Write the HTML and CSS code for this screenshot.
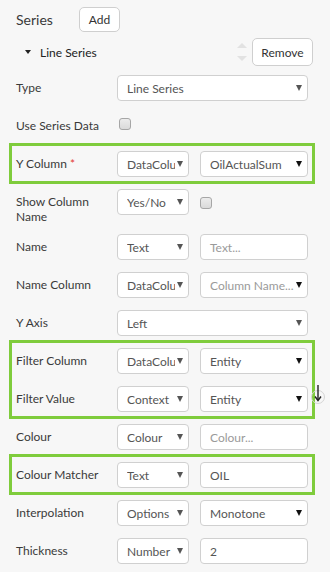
FILE: index.html
```html
<!DOCTYPE html>
<html lang="en">
<head>
    <meta charset="UTF-8">
    <meta name="viewport" content="width=device-width, initial-scale=1.0">
    <title>Series Editor</title>
    <link rel="stylesheet" href="styles.css">
</head>
<body>
    <div class="panel">
        <div class="series-head">
            <span class="title">Series</span>
            <button class="btn btn-add">Add</button>
        </div>

        <div class="item-head">
            <span class="caret"></span>
            <span class="item-name">Line Series</span>
            <span class="sorter">
                <span class="sort-up"></span>
                <span class="sort-down"></span>
            </span>
            <button class="btn btn-remove">Remove</button>
        </div>

        <div class="row">
            <div class="label">Type</div>
            <div class="controls">
                <div class="select full"><span class="val">Line Series</span><span class="arrow"></span></div>
            </div>
        </div>

        <div class="row">
            <div class="label">Use Series Data</div>
            <div class="controls">
                <span class="check check-top"></span>
            </div>
        </div>

        <div class="hl">
            <div class="row">
                <div class="label">Y Column <span class="req">*</span></div>
                <div class="controls">
                    <div class="select sm"><span class="val">DataColu</span><span class="arrow"></span></div>
                    <div class="select lg"><span class="val">OilActualSum</span><span class="arrow dark"></span></div>
                </div>
            </div>
        </div>

        <div class="row row-wrap">
            <div class="label">Show Column Name</div>
            <div class="controls">
                <div class="select sm"><span class="val">Yes/No</span><span class="arrow"></span></div>
                <span class="check check-mid"></span>
            </div>
        </div>

        <div class="row">
            <div class="label">Name</div>
            <div class="controls">
                <div class="select sm"><span class="val">Text</span><span class="arrow"></span></div>
                <div class="input lg"><span class="placeholder">Text...</span></div>
            </div>
        </div>

        <div class="row">
            <div class="label">Name Column</div>
            <div class="controls">
                <div class="select sm"><span class="val">DataColu</span><span class="arrow"></span></div>
                <div class="select lg"><span class="val placeholder">Column Name...</span><span class="arrow dark"></span></div>
            </div>
        </div>

        <div class="row">
            <div class="label">Y Axis</div>
            <div class="controls">
                <div class="select full"><span class="val">Left</span><span class="arrow"></span></div>
            </div>
        </div>

        <div class="hl">
            <div class="row">
                <div class="label">Filter Column</div>
                <div class="controls">
                    <div class="select sm"><span class="val">DataColu</span><span class="arrow"></span></div>
                    <div class="select lg"><span class="val">Entity</span><span class="arrow dark"></span></div>
                </div>
            </div>
            <div class="row">
                <div class="label">Filter Value</div>
                <div class="controls">
                    <div class="select sm"><span class="val">Context</span><span class="arrow"></span></div>
                    <div class="select lg"><span class="val">Entity</span><span class="arrow dark"></span></div>
                </div>
            </div>
            <svg class="move-icon" width="16" height="24" viewBox="0 0 16 24">
                <circle cx="8" cy="17" r="6.5" fill="none" stroke="#d4d4d4" stroke-width="1"/>
                <line x1="8" y1="5" x2="8" y2="20" stroke="#222" stroke-width="1.4"/>
                <polyline points="5,16.5 8,20.5 11,16.5" fill="none" stroke="#222" stroke-width="1.4"/>
            </svg>
        </div>

        <div class="row">
            <div class="label">Colour</div>
            <div class="controls">
                <div class="select sm"><span class="val">Colour</span><span class="arrow"></span></div>
                <div class="input lg"><span class="placeholder">Colour...</span></div>
            </div>
        </div>

        <div class="hl">
            <div class="row">
                <div class="label">Colour Matcher</div>
                <div class="controls">
                    <div class="select sm"><span class="val">Text</span><span class="arrow"></span></div>
                    <div class="input lg"><span class="val">OIL</span></div>
                </div>
            </div>
        </div>

        <div class="row">
            <div class="label">Interpolation</div>
            <div class="controls">
                <div class="select sm"><span class="val">Options</span><span class="arrow"></span></div>
                <div class="select lg"><span class="val">Monotone</span><span class="arrow dark"></span></div>
            </div>
        </div>

        <div class="row">
            <div class="label">Thickness</div>
            <div class="controls">
                <div class="select sm"><span class="val">Number</span><span class="arrow"></span></div>
                <div class="input lg"><span class="val">2</span></div>
            </div>
        </div>
    </div>
</body>
</html>
```

FILE: styles.css
```css
* {
    box-sizing: border-box;
    margin: 0;
    padding: 0;
}
body {
    font-family: 'Lato', 'Liberation Sans', sans-serif;
    font-size: 12px;
    color: #3a3a3a;
    background-color: #f7f7f7;
    overflow: hidden;
}
.panel {
    padding-top: 7px;
}
.btn {
    font-family: inherit;
    font-size: 12px;
    color: #333;
    background-color: #fff;
    border: 1px solid #cfcfcf;
    border-radius: 5px;
    cursor: pointer;
}
.series-head {
    display: flex;
    align-items: center;
    padding-left: 16px;
    height: 25px;
}
.title {
    width: 63px;
    font-size: 14px;
}
.btn-add {
    width: 41px;
    height: 25px;
}
.item-head {
    display: flex;
    align-items: center;
    height: 28px;
    margin-top: 6px;
    margin-bottom: 3px;
    padding-left: 25px;
}
.caret {
    width: 0;
    height: 0;
    border-left: 3px solid transparent;
    border-right: 3px solid transparent;
    border-top: 4px solid #222;
    margin-right: 9px;
}
.item-name {
    flex: 1;
    color: #222;
}
.sorter {
    display: flex;
    flex-direction: column;
    gap: 8px;
    margin-right: 5px;
}
.sort-up,
.sort-down {
    width: 0;
    height: 0;
    border-left: 5px solid transparent;
    border-right: 5px solid transparent;
}
.sort-up {
    border-bottom: 5px solid #e2e2e2;
}
.sort-down {
    border-top: 5px solid #e2e2e2;
}
.btn-remove {
    width: 61px;
    height: 28px;
    margin-right: 17px;
}
.row {
    display: flex;
    align-items: flex-start;
    padding: 6px 0 6px 16px;
}
.row-wrap {
    padding-bottom: 4px;
}
.label {
    width: 92px;
    margin-right: 9px;
    padding-top: 5px;
    line-height: 15px;
}
.req {
    color: #e53935;
}
.controls {
    display: flex;
    gap: 11px;
    min-height: 26px;
}
.select,
.input {
    display: flex;
    align-items: center;
    height: 26px;
    padding: 0 5px 0 9px;
    background-color: #fff;
    border: 1px solid #d0d0d0;
    border-radius: 4px;
    color: #555;
}
.val {
    flex: 1;
    min-width: 0;
    overflow: hidden;
    white-space: nowrap;
}
.placeholder {
    color: #9a9a9a;
    white-space: nowrap;
}
.arrow {
    flex-shrink: 0;
    width: 0;
    height: 0;
    margin-left: 2px;
    border-left: 3.5px solid transparent;
    border-right: 3.5px solid transparent;
    border-top: 6px solid #555;
}
.arrow.dark {
    border-top-color: #111;
}
.sm {
    width: 72px;
}
.lg {
    width: 108px;
}
.full {
    width: 191px;
}
.check {
    display: block;
    width: 12px;
    height: 12px;
    border: 1px solid #a6a6a6;
    border-radius: 3px;
    background: linear-gradient(#ececec, #dadada);
}
.check-top {
    margin: 5px 0 0 2px;
}
.check-mid {
    margin-top: 8px;
}
.hl {
    position: relative;
}
.hl::before {
    content: "";
    position: absolute;
    top: -2px;
    bottom: -1px;
    left: 9px;
    right: 15px;
    border: 3px solid #7fcc3c;
    pointer-events: none;
}
.move-icon {
    position: absolute;
    right: 4px;
    bottom: 14px;
}
```
